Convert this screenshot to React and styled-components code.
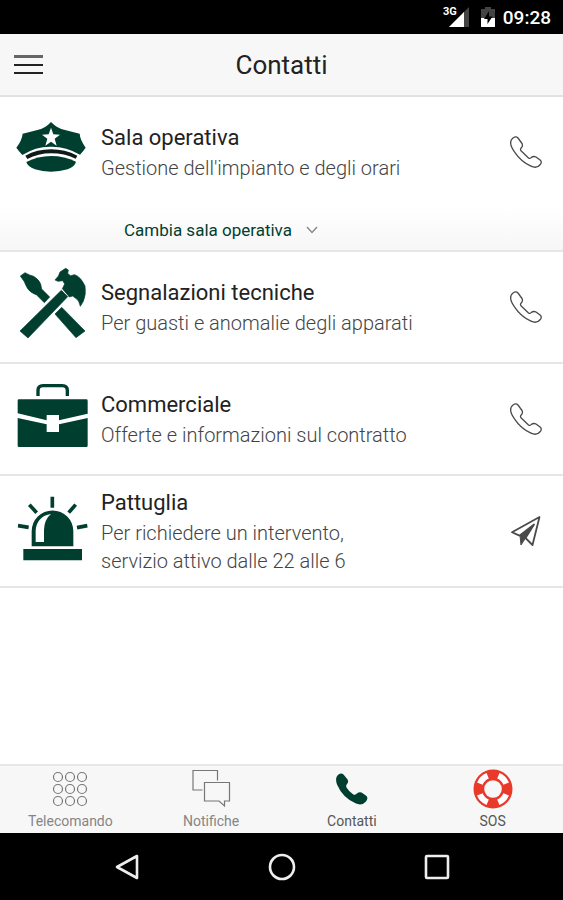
import React, { useState } from "react";
import styled, { createGlobalStyle } from "styled-components";

const GREEN = "#003f2f";
const RED = "#e8392b";

const GlobalStyle = createGlobalStyle`
  * {
    box-sizing: border-box;
  }

  body {
    margin: 0;
    background: #fff;
    font-family: Roboto, "Liberation Sans", sans-serif;
    color: #222;
  }

  svg {
    display: block;
    flex: none;
  }
`;

const Page = styled.div`
  display: flex;
  flex-direction: column;
  min-height: 100vh;
`;

const StatusBar = styled.div`
  display: flex;
  align-items: center;
  justify-content: flex-end;
  gap: 12px;
  height: 34px;
  padding: 0 12px;
  background: #000;
  color: #fff;
`;

const Clock = styled.time`
  margin-left: -4px;
  font-size: 19px;
  font-weight: 500;
`;

const Signal = styled.span`
  display: flex;
  align-items: flex-start;
`;

const Network = styled.span`
  margin-right: -8px;
  font-size: 11px;
  font-weight: 700;
  line-height: 10px;
`;

const Header = styled.header`
  display: grid;
  grid-template-columns: 56px 1fr 56px;
  align-items: center;
  height: 63px;
  background: #f7f7f7;
  border-bottom: 2px solid #e2e2e2;
`;

const MenuButton = styled.button`
  justify-self: start;
  padding: 8px 14px;
  border: 0;
  background: none;
  cursor: pointer;
`;

const Title = styled.h1`
  margin: 0;
  font-size: 26px;
  font-weight: 400;
  line-height: 32px;
  text-align: center;
`;

const Main = styled.main`
  flex: 1;
`;

const List = styled.ul`
  margin: 0;
  padding: 0;
  list-style: none;
`;

const Item = styled.li`
  border-bottom: 2px solid #e6e6e6;
`;

const Row = styled.div`
  display: flex;
  align-items: center;
  min-height: 110px;
  padding: 11px 21px 11px 16px;
`;

const RowText = styled.div`
  flex: 1;
  padding: 0 13px;
`;

const Name = styled.h2`
  margin: 0;
  font-size: 22px;
  font-weight: 400;
  line-height: 32px;
`;

const Description = styled.p`
  margin: 0;
  font-size: 20px;
  font-weight: 300;
  line-height: 28px;
  color: #444;
  white-space: pre-line;
`;

const Action = styled.a`
  color: #4a4a4a;
`;

const ChangeRoom = styled.button`
  display: flex;
  align-items: center;
  gap: 14px;
  width: 100%;
  height: 43px;
  padding: 3px 124px 0;
  border: 0;
  background: linear-gradient(#fff, #f6f6f6);
  font-family: inherit;
  font-size: 17px;
  color: ${GREEN};
  cursor: pointer;
`;

const TabBar = styled.nav`
  display: grid;
  grid-template-columns: repeat(4, 1fr);
  height: 69px;
  background: #f7f7f7;
  border-top: 2px solid #e8e8e8;
`;

const Tab = styled.a`
  display: flex;
  flex-direction: column;
  align-items: center;
  gap: 2px;
  padding-top: 3px;
  font-size: 14px;
  line-height: 20px;
  text-decoration: none;
  color: ${(props) => (props.$dark ? "#555" : "#858585")};
`;

const SystemBar = styled.div`
  display: grid;
  grid-template-columns: repeat(3, 1fr);
  height: 67px;
  padding: 0 49px;
  background: #000;
`;

const SystemButton = styled.button`
  display: flex;
  align-items: center;
  justify-content: center;
  border: 0;
  background: none;
  cursor: pointer;
`;

const CapIcon = () => (
  <svg width="72" height="80" viewBox="48 249 216 240" fill={GREEN}>
    <path d="M153 279 Q172 299 195 303 Q220 309 239 314 Q240 332 257 356 Q250 366 240 377 Q197 352 153 353 Q108 352 67 378 Q57 367 49 356 Q66 334 68 314 Q88 309 112 303 Q135 299 153 279Z" />
    <path d="M76 380 Q111 361 153 361 Q195 361 232 380 L227 389 Q193 373 153 373 Q115 373 82 390Z" fill="#101a17" />
    <path d="M79 399 Q113 381 153 381 Q194 381 228 398 Q225 412 203 421 Q179 428 153 428 Q127 428 105 421 Q82 412 79 399Z" />
    <path d="M153 296 L160 316 L180 317 L164 329 L170 350 L153 338 L136 350 L142 329 L126 317 L146 316Z" fill="#fff" />
  </svg>
);

const ToolsIcon = () => (
  <svg width="72" height="80" viewBox="48 39 216 240" fill={GREEN} stroke={GREEN} strokeWidth="2" strokeLinejoin="round">
    <path d="M61 66 L75 56 Q89 64 101 67 Q117 77 122 90 L125 105 L149 129 L133 146 L110 123 Q91 116 83 104 Q76 92 73 83Z" />
    <path d="M165 180 L185 160 L255 231 L228 251Z" />
    <path d="M60 231 L184 109 L203 128 L84 252Z" />
    <path d="M165 78 Q178 66 180 54 L197 43 L205 48 L203 58 L211 65 L224 62 Q242 68 255 96 Q259 120 250 142 L241 157 Q237 139 229 134 L218 126 L208 129 L187 104 L194 90 L188 80 L174 82Z" />
  </svg>
);

const BriefcaseIcon = () => (
  <svg width="72" height="80" viewBox="48 30 216 240" fill={GREEN}>
    <path d="M114 81 V65 Q114 50 129 50 H187 Q202 50 202 65 V81" fill="none" stroke={GREEN} strokeWidth="10" />
    <path d="M57 91 H259 Q263 91 263 95 V134 L177 154 V138 H140 V154 L53 133 V95 Q53 91 57 91Z" />
    <path d="M53 147 L140 166 V189 H177 V166 L263 147 V230 Q263 234 259 234 H57 Q53 234 53 230Z" />
  </svg>
);

const SirenIcon = () => (
  <svg width="72" height="80" viewBox="48 36 216 240" fill={GREEN}>
    <path d="M70 210 H246 V244 H70Z M95 202 V157 A62 62 0 0 1 220 157 V202Z" />
    <path d="M107 189 V153 Q111 112 153 105 Q133 121 132 153 V189Z" fill="#fff" />
    <path d="M157 53 V86 M88 77 L110 101 M227 77 L206 101 M54 140 L86 145 M262 140 L231 146" stroke={GREEN} strokeWidth="11" />
  </svg>
);

const PhoneIcon = () => (
  <svg width="32" height="32" viewBox="0 0 32 32" fill="none" stroke="currentColor" strokeWidth="1.3" strokeLinejoin="round">
    <path d="M3 2 Q6 -0.2 8 2 L12 7.5 Q13.3 10 11 12.2 Q10 13.6 11 14.8 L18.5 22 Q19.8 23 21.2 21.6 Q23.5 19.7 26 21 L30.4 24.3 Q32 26 30.6 28.2 Q27 33 21 30.2 Q11 25.6 5 16.6 Q-2.6 6.2 3 2Z" />
  </svg>
);

const PlaneIcon = () => (
  <svg width="32" height="32" viewBox="0 0 32 32" fill="none" stroke="currentColor" strokeWidth="1.8" strokeLinejoin="round">
    <path d="M29.5 2 L2 17.2 L9.5 20.6 L24 9.5 L15.5 23 L22.5 30 L29.5 2Z" />
    <path d="M10 20.5 L24 9.5 L15.5 23 L11 30Z" fill="currentColor" strokeWidth="1" />
  </svg>
);

const KeypadIcon = () => (
  <svg width="40" height="40" viewBox="0 0 40 40" fill="none" stroke="#777" strokeWidth="1.2">
    {[8, 20, 32].map((y) =>
      [8, 20, 32].map((x) => <circle key={`${x}-${y}`} cx={x} cy={y} r="4.5" />)
    )}
  </svg>
);

const ChatIcon = () => (
  <svg width="40" height="40" viewBox="0 0 40 40" fill="none" stroke="#777" strokeWidth="1.2">
    <path d="M11.5 21 H2 V1.5 H26.5 V11.5" />
    <path d="M13.5 13.5 H38.5 V32 H33.5 V37 L28 32 H13.5Z" />
  </svg>
);

const HandsetIcon = () => (
  <svg width="40" height="40" viewBox="0 0 40 40" fill={GREEN}>
    <path d="M5.2 6.8 Q8.5 3 11.5 5.4 L15.4 10.2 Q17 12.8 15 15 Q13.4 16.7 14.5 18.4 Q17 22.6 21.3 25.4 Q23 26.3 24.6 24.8 Q27 22.7 29.6 23.6 L34.5 27 Q36.5 29.2 34 32.4 Q30 37 24 34.6 Q10.6 28.6 5 15.4 Q3 9.8 5.2 6.8Z" />
  </svg>
);

const LifebuoyIcon = () => (
  <svg width="40" height="40" viewBox="0 0 40 40">
    <circle cx="20" cy="20" r="19.5" fill={RED} />
    <circle
      cx="20"
      cy="20"
      r="14.2"
      fill="none"
      stroke="#fff"
      strokeWidth="6"
      pathLength="360"
      strokeDasharray="46 44"
      strokeDashoffset="-22"
    />
    <circle cx="20" cy="20" r="8.8" fill="#f7f7f7" />
  </svg>
);

const contacts = [
  {
    name: "Sala operativa",
    description: "Gestione dell'impianto e degli orari",
    Icon: CapIcon,
    hasRooms: true,
  },
  {
    name: "Segnalazioni tecniche",
    description: "Per guasti e anomalie degli apparati",
    Icon: ToolsIcon,
  },
  {
    name: "Commerciale",
    description: "Offerte e informazioni sul contratto",
    Icon: BriefcaseIcon,
  },
  {
    name: "Pattuglia",
    description: "Per richiedere un intervento,\nservizio attivo dalle 22 alle 6",
    Icon: SirenIcon,
    message: true,
  },
];

const tabs = [
  { label: "Telecomando", href: "#telecomando", Icon: KeypadIcon },
  { label: "Notifiche", href: "#notifiche", Icon: ChatIcon },
  { label: "Contatti", href: "#contatti", Icon: HandsetIcon, dark: true },
  { label: "SOS", href: "#sos", Icon: LifebuoyIcon, dark: true },
];

const Contact = ({ name, description, Icon, hasRooms, message }) => {
  const [open, setOpen] = useState(false);

  return (
    <Item>
      <Row>
        <Icon />
        <RowText>
          <Name>{name}</Name>
          <Description>{description}</Description>
        </RowText>
        <Action href={message ? "#messaggio" : "tel:"} aria-label={name}>
          {message ? <PlaneIcon /> : <PhoneIcon />}
        </Action>
      </Row>
      {hasRooms && (
        <ChangeRoom type="button" aria-expanded={open} onClick={() => setOpen(!open)}>
          Cambia sala operativa
          <svg width="12" height="8" viewBox="0 0 12 8" fill="none" stroke="#888" strokeWidth="1.4">
            <path d="M1 1 L6 6.5 L11 1" />
          </svg>
        </ChangeRoom>
      )}
    </Item>
  );
};

const App = () => (
  <>
    <GlobalStyle />
    <Page>
      <StatusBar>
        <Signal>
          <Network>3G</Network>
          <svg width="20" height="20" viewBox="0 0 20 20">
            <path d="M0 20 L20 0 V20Z" fill="#444" />
            <path d="M0 20 L15 5 V20Z" fill="#fff" />
          </svg>
        </Signal>
        <svg width="14" height="20" viewBox="0 0 14 20">
          <path d="M0 2 H4 V0 H10 V2 H14 V11 H0Z" fill="#444" />
          <path d="M0 11 H14 V20 H0Z" fill="#fff" />
          <path d="M8 4 L3 12 H6.5 V17 L11.5 9.5 H8Z" fill="#000" />
        </svg>
        <Clock>09:28</Clock>
      </StatusBar>
      <Header>
        <MenuButton type="button" aria-label="Menu">
          <svg width="29" height="20" viewBox="0 0 29 20" fill="#222">
            <path d="M0 0 H29 V3 H0Z" fill="#666" />
            <path d="M0 9 H29 V11 H0Z M0 17 H29 V19 H0Z" />
          </svg>
        </MenuButton>
        <Title>Contatti</Title>
      </Header>
      <Main>
        <List>
          {contacts.map((contact) => (
            <Contact key={contact.name} {...contact} />
          ))}
        </List>
      </Main>
      <TabBar>
        {tabs.map(({ label, href, Icon, dark }) => (
          <Tab key={label} href={href} $dark={dark}>
            <Icon />
            {label}
          </Tab>
        ))}
      </TabBar>
      <SystemBar>
        <SystemButton type="button" aria-label="Indietro">
          <svg width="28" height="28" viewBox="0 0 28 28" fill="none" stroke="#eee" strokeWidth="2.6" strokeLinejoin="round">
            <path d="M4 14 L24 3 V25Z" />
          </svg>
        </SystemButton>
        <SystemButton type="button" aria-label="Home">
          <svg width="28" height="28" viewBox="0 0 28 28" fill="none" stroke="#eee" strokeWidth="2.6">
            <circle cx="14" cy="14" r="12" />
          </svg>
        </SystemButton>
        <SystemButton type="button" aria-label="Recenti">
          <svg width="28" height="28" viewBox="0 0 28 28" fill="none" stroke="#eee" strokeWidth="2.6" strokeLinejoin="round">
            <rect x="3" y="3" width="22" height="22" rx="1" />
          </svg>
        </SystemButton>
      </SystemBar>
    </Page>
  </>
);

export default App;
